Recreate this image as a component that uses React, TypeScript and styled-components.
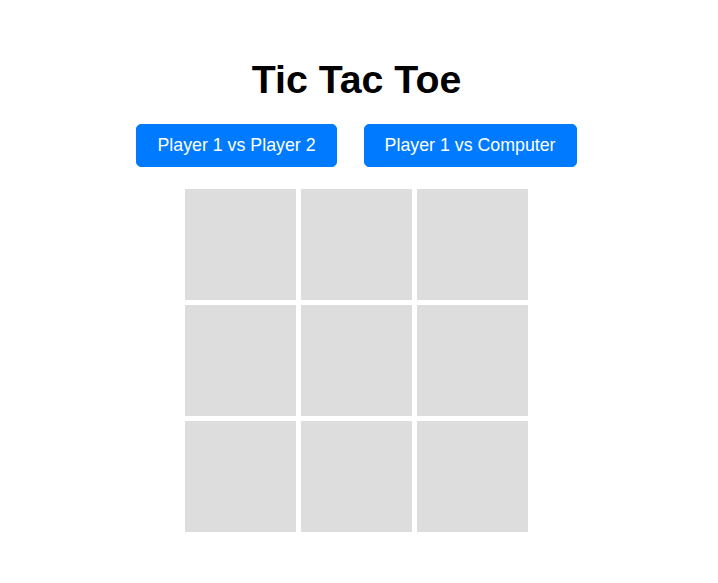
import React, { useState } from "react";
import styled, { createGlobalStyle } from "styled-components";

const Global = createGlobalStyle`
  html, body { margin: 0; padding: 0; background: #fff; }
  body { font-family: "Liberation Sans", Arial, sans-serif; }
`;

const Page = styled.div`
  display: flex;
  flex-direction: column;
  align-items: center;
  padding-top: 56px;
  padding-right: 5px;
`;

const Title = styled.h1`
  margin: 0;
  font-size: 39.3px;
  line-height: 46px;
  font-weight: bold;
  color: #000;
`;

const ModeBar = styled.div`
  display: flex;
  gap: 27px;
  margin-top: 22px;
`;

const ModeButton = styled.button`
  font-family: "Liberation Sans", Arial, sans-serif;
  font-size: 17.8px;
  line-height: 21px;
  padding: 10px 20px;
  border: 1px solid #007bff;
  border-radius: 5px;
  background: #007bff;
  color: #fff;
  cursor: pointer;
`;

const Board = styled.div`
  display: grid;
  grid-template-columns: repeat(3, 111px);
  grid-auto-rows: 111px;
  gap: 5px;
  margin-top: 22px;
`;

const Cell = styled.div`
  background: #dddddd;
  display: flex;
  align-items: center;
  justify-content: center;
  font-size: 48px;
  font-weight: bold;
  cursor: pointer;
`;

export default function App() {
  const [cells, setCells] = useState<string[]>(Array(9).fill(""));
  return (
    <>
      <Global />
      <Page>
        <Title>Tic Tac Toe</Title>
        <ModeBar>
          <ModeButton onClick={() => setCells(Array(9).fill(""))}>Player 1 vs Player 2</ModeButton>
          <ModeButton onClick={() => setCells(Array(9).fill(""))}>Player 1 vs Computer</ModeButton>
        </ModeBar>
        <Board>
          {cells.map((c, i) => (
            <Cell key={i}>{c}</Cell>
          ))}
        </Board>
      </Page>
    </>
  );
}
